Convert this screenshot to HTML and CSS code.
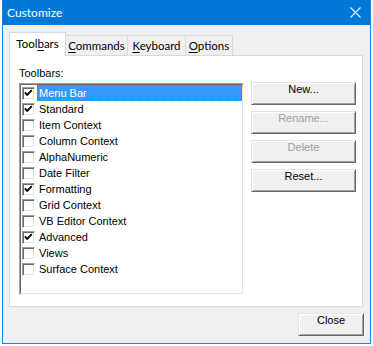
FILE: index.html
```html
<html>
<head>
<meta name="viewport" content="width=device-width, initial-scale=1" />
<title>Customize</title>
<link rel="stylesheet" href="styles.css">
</head>
<body>

<div class="window">
    <div class="titlebar">
        <span class="caption">Customize</span>
        <svg class="close-x" width="11" height="11" viewBox="0 0 11 11">
            <path d="M0.5 0.5 L10.5 10.5 M10.5 0.5 L0.5 10.5" stroke="#fff" stroke-width="1.1" fill="none" />
        </svg>
    </div>

    <div class="tabs">
        <div class="tab active">Tool<u>b</u>ars</div>
        <div class="tab w-cmd"><u>C</u>ommands</div>
        <div class="tab w-kbd"><u>K</u>eyboard</div>
        <div class="tab w-opt"><u>O</u>ptions</div>
    </div>

    <div class="panel">
        <div class="col-list">
            <div class="label">Toolbars:</div>
            <div class="listbox">
                <div class="listbox-inner">
                    <div class="row selected"><span class="check on"></span><span class="name">Menu Bar</span></div>
                    <div class="row"><span class="check on"></span><span class="name">Standard</span></div>
                    <div class="row"><span class="check"></span><span class="name">Item Context</span></div>
                    <div class="row"><span class="check"></span><span class="name">Column Context</span></div>
                    <div class="row"><span class="check"></span><span class="name">AlphaNumeric</span></div>
                    <div class="row"><span class="check"></span><span class="name">Date Filter</span></div>
                    <div class="row"><span class="check on"></span><span class="name">Formatting</span></div>
                    <div class="row"><span class="check"></span><span class="name">Grid Context</span></div>
                    <div class="row"><span class="check"></span><span class="name">VB Editor Context</span></div>
                    <div class="row"><span class="check on"></span><span class="name">Advanced</span></div>
                    <div class="row"><span class="check"></span><span class="name">Views</span></div>
                    <div class="row"><span class="check"></span><span class="name">Surface Context</span></div>
                </div>
            </div>
        </div>
        <div class="col-buttons">
            <div class="btn">New...</div>
            <div class="btn disabled">Rename...</div>
            <div class="btn disabled">Delete</div>
            <div class="btn">Reset...</div>
        </div>
    </div>

    <div class="footer">
        <div class="btn btn-close">Close</div>
    </div>
</div>

</body>
</html>
```

FILE: styles.css
```css
body { margin: 0; background: #fff; }

.window { margin-left: 2px; width: 367px; height: 343px; border: 1px solid #1c84d8; border-top: none; background: #f0f0f0; }

/* title bar */
.titlebar { height: 25px; background: #0078d7; display: flex; align-items: center; justify-content: space-between; padding-left: 4px; }
.titlebar .caption { color: #fff; font: 12px Lato, "Liberation Sans", sans-serif; }
.titlebar .close-x { margin-right: 9px; }

/* tab strip */
.tabs { display: flex; align-items: flex-end; margin: 7px 0 0 6px; height: 23px; font: 11.5px Lato, "Liberation Sans", sans-serif; color: #000; }
.tab { box-sizing: border-box; height: 20px; border: 1px solid #d9d9d9; border-bottom: none; background: #f0f0f0; text-align: center; line-height: 19px; margin-left: -1px; }
.tab u { text-decoration-thickness: 1px; text-underline-offset: 2px; }
.tab.active { width: 57px; height: 24px; margin-left: 0; margin-bottom: -1px; background: #fff; line-height: 22px; position: relative; z-index: 1; }
.tab.w-cmd { width: 63px; }
.tab.w-kbd { width: 59px; }
.tab.w-opt { width: 48px; }

/* tab page */
.panel { box-sizing: border-box; margin: 0 7px 0 6px; height: 252px; border: 1px solid #d9d9d9; background: #fff; display: flex; font: 11px "Liberation Sans", Arial, sans-serif; color: #000; }
.col-list { padding-left: 9px; }
.label { padding-top: 11px; line-height: 13px; margin-bottom: 3px; }

.listbox { width: 225px; height: 212px; box-sizing: border-box; border: 1px solid; border-color: #a0a0a0 #fff #fff #a0a0a0; }
.listbox-inner { height: 100%; box-sizing: border-box; border: 1px solid; border-color: #696969 #e3e3e3 #e3e3e3 #696969; padding: 0 0 0 1px; }
.row { display: flex; align-items: center; height: 16px; }
.check { box-sizing: border-box; width: 13px; height: 13px; flex: none; background: #fff; border: 1px solid; border-color: #a0a0a0 #fff #fff #a0a0a0; box-shadow: inset 1px 1px #696969, inset -1px -1px #e3e3e3; margin-right: 2px; }
.check.on { background: #fff url("data:image/svg+xml;utf8,<svg xmlns='http://www.w3.org/2000/svg' width='11' height='11'><path d='M2 4.5 L4.2 6.8 L8.8 2.2' stroke='black' stroke-width='1.9' fill='none'/></svg>") center no-repeat; }
.name { flex: 1; height: 16px; line-height: 16px; padding-left: 2px; }
.row.selected .name { background: #3399ff; color: #fff; outline: 1px dotted #cc6600; outline-offset: -1px; }

.col-buttons { display: flex; flex-direction: column; gap: 6px; margin: 26px 0 0 7px; }

/* push buttons */
.btn { box-sizing: border-box; width: 105px; height: 23px; border: 1px solid; border-color: #e3e3e3 #696969 #696969 #e3e3e3; box-shadow: inset 1px 1px #fff, inset -1px -1px #a0a0a0; background: #f0f0f0; text-align: center; line-height: 20px; font: 11px "Liberation Sans", Arial, sans-serif; color: #000; }
.btn.disabled { color: #a0a0a0; }

.footer { display: flex; justify-content: flex-end; padding: 6px 6px 0 0; }
.btn-close { width: 66px; }
```
